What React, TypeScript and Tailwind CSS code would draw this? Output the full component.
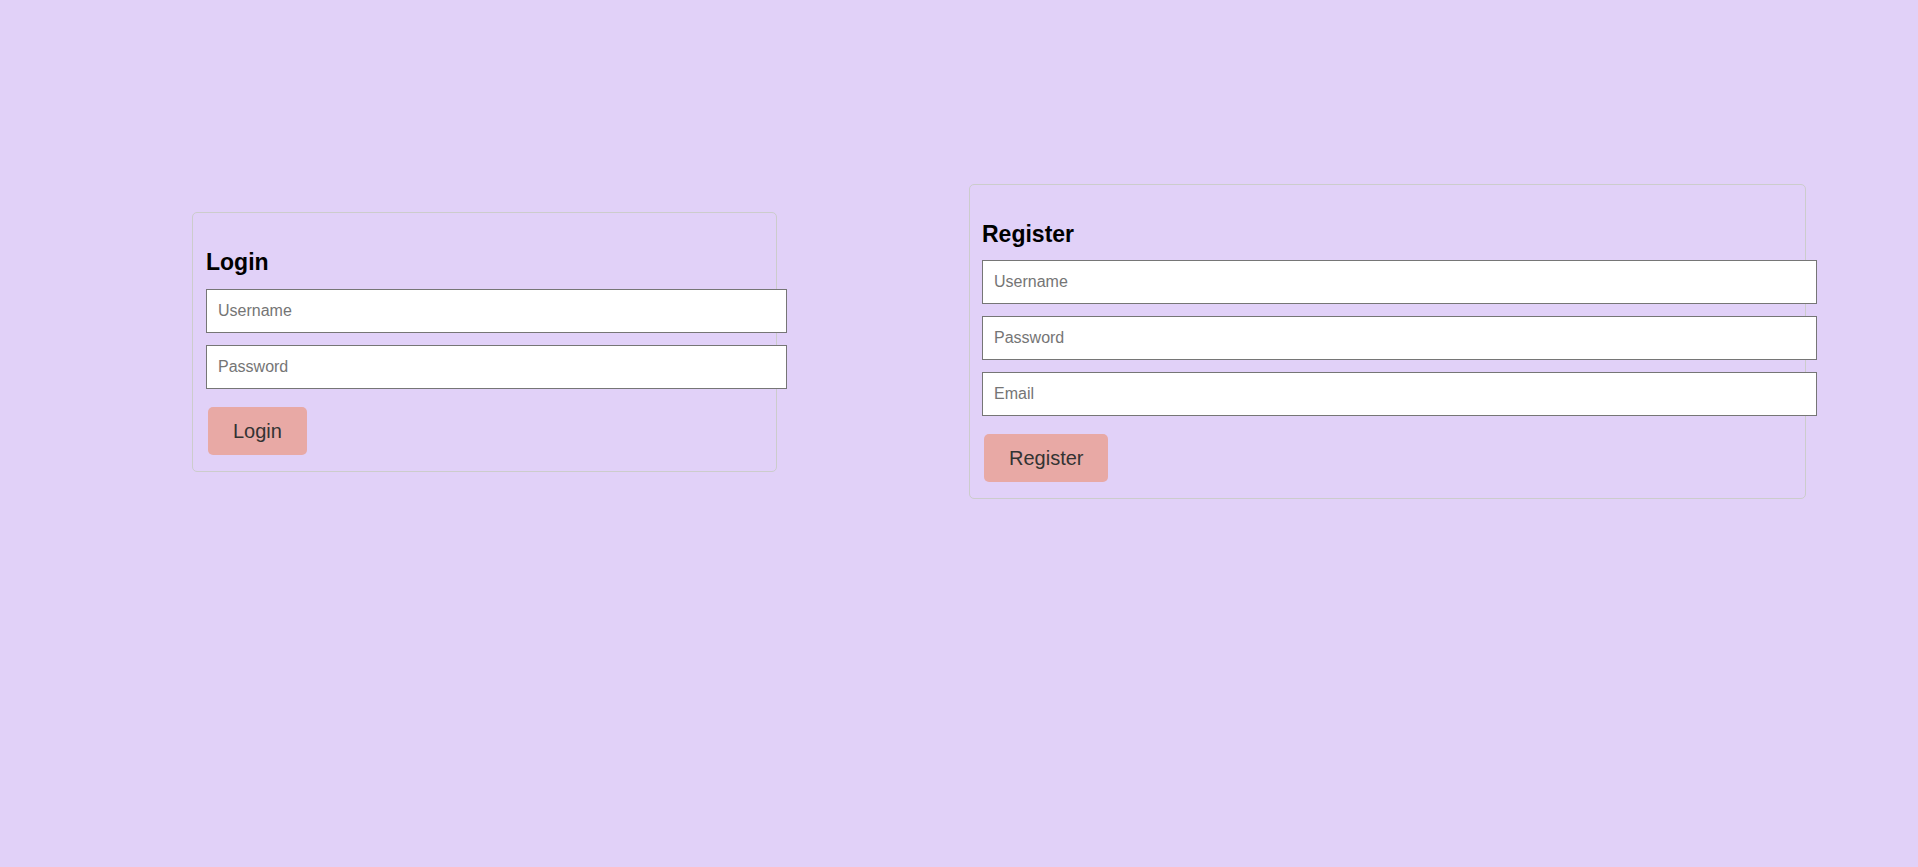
const font = { fontFamily: '"Liberation Sans", Arial, sans-serif' };

const inputCls =
  'block h-[44px] border border-[#767676] bg-white px-[11px] text-[16px] text-black outline-none placeholder:text-[#757575]';

const Card = ({
  title,
  fields,
  action,
  cardCls,
  inputW,
  listCls,
}: {
  title: string;
  fields: string[];
  action: string;
  cardCls: string;
  inputW: string;
  listCls: string;
}) => (
  <div className={`${cardCls} shrink-0 rounded-[5px] border border-[#cccccc] pt-[36px] pb-[16px]`}>
    <h2 className="text-[23px] leading-[27px] font-bold text-black">{title}</h2>
    <div className={`${listCls} flex flex-col gap-[12px]`}>
      {fields.map(f => (
        <input
          key={f}
          type={f === 'Password' ? 'password' : 'text'}
          placeholder={f}
          className={`${inputCls} ${inputW}`}
        />
      ))}
    </div>
    <button className="mt-[18px] ml-[2px] h-[48px] rounded-[5px] bg-[#e8a9a5] px-[25px] text-[20px] text-[#333333]">
      {action}
    </button>
  </div>
);

export default function App() {
  return (
    <div className="min-h-screen w-full bg-[#e1d1f8]" style={font}>
      <div className="flex items-center pl-[192px] pt-[184px] gap-[192px]">
        <Card
          title="Login"
          fields={['Username', 'Password']}
          action="Login"
          cardCls="w-[585px] pl-[13px]"
          inputW="w-[581px]"
          listCls="mt-[13px]"
        />
        <Card
          title="Register"
          fields={['Username', 'Password', 'Email']}
          action="Register"
          cardCls="w-[837px] pl-[12px]"
          inputW="w-[835px]"
          listCls="mt-[12px]"
        />
      </div>
    </div>
  );
}
